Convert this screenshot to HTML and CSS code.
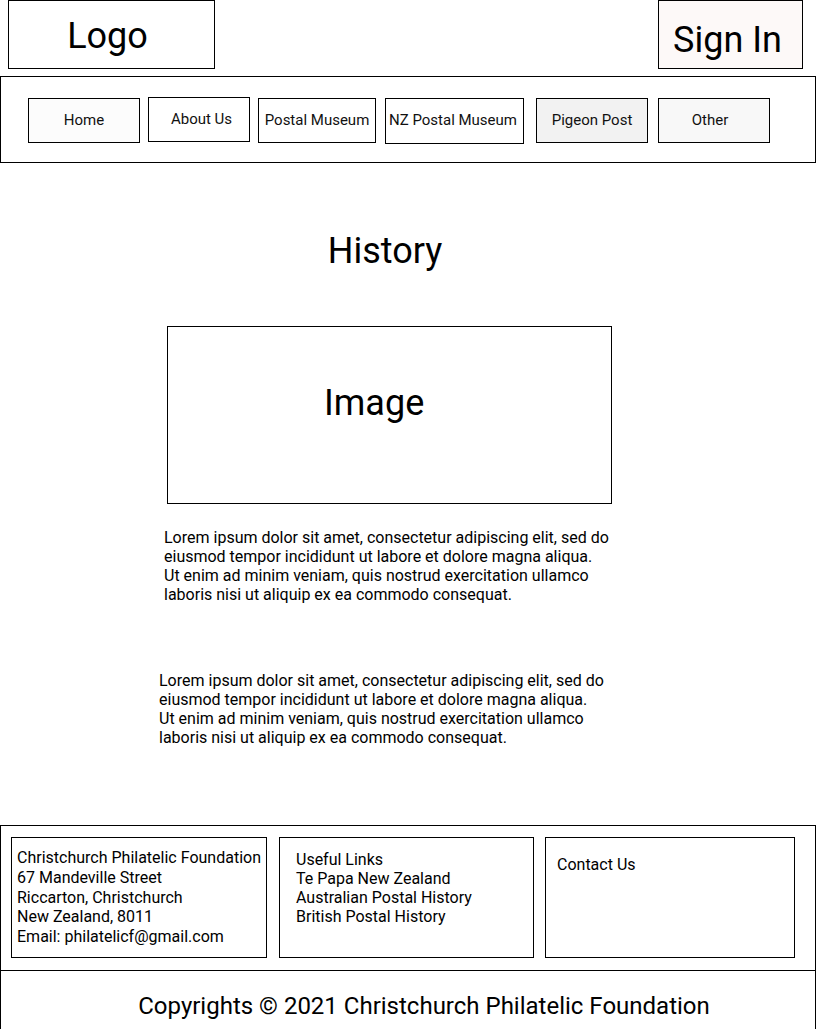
FILE: index.html
```html
<!DOCTYPE html>
<html lang="en">
<head>
<meta charset="utf-8">
<title>History</title>
<link rel="stylesheet" href="styles.css">
</head>
<body>
<header class="top">
  <div class="logo">Logo</div>
  <div class="signin">Sign In</div>
</header>
<nav class="nav">
  <a class="nav-item home">Home</a>
  <a class="nav-item about">About Us</a>
  <a class="nav-item postal">Postal Museum</a>
  <a class="nav-item nz">NZ Postal Museum</a>
  <a class="nav-item pigeon">Pigeon Post</a>
  <a class="nav-item other">Other</a>
</nav>
<main class="main">
  <h1 class="title">History</h1>
  <div class="image"><span class="image-label">Image</span></div>
  <p class="para para-one">Lorem ipsum dolor sit amet, consectetur adipiscing elit, sed do<br>eiusmod tempor incididunt ut labore et dolore magna aliqua.<br>Ut enim ad minim veniam, quis nostrud exercitation ullamco<br>laboris nisi ut aliquip ex ea commodo consequat.</p>
  <p class="para para-two">Lorem ipsum dolor sit amet, consectetur adipiscing elit, sed do<br>eiusmod tempor incididunt ut labore et dolore magna aliqua.<br>Ut enim ad minim veniam, quis nostrud exercitation ullamco<br>laboris nisi ut aliquip ex ea commodo consequat.</p>
</main>
<footer class="footer">
  <div class="footer-cols">
    <div class="fcol fcol-address">Christchurch Philatelic Foundation<br>67 Mandeville Street<br>Riccarton, Christchurch<br>New Zealand, 8011<br>Email: philatelicf@gmail.com</div>
    <div class="fcol fcol-links">Useful Links<br>Te Papa New Zealand<br>Australian Postal History<br>British Postal History</div>
    <div class="fcol fcol-contact">Contact Us</div>
  </div>
  <div class="copyright">Copyrights © 2021 Christchurch Philatelic Foundation</div>
</footer>
</body>
</html>
```
FILE: styles.css
```css
* { box-sizing: border-box; }
html, body { margin: 0; padding: 0; background: #fff; }
body {
  font-family: Roboto, "Liberation Sans", sans-serif;
  color: #000;
  width: 816px;
}
.top {
  display: flex;
  justify-content: space-between;
  height: 69px;
}
.logo {
  margin-left: 8px;
  width: 207px;
  height: 69px;
  border: 1px solid #000;
  font-size: 36px;
  text-align: center;
  padding: 3px 8px 0 0;
  line-height: 64px;
}
.signin {
  margin-right: 13px;
  width: 145px;
  height: 69px;
  border: 1px solid #000;
  background: #fdf9f8;
  font-size: 36px;
  text-align: center;
  padding: 15px 6px 0 0;
  line-height: 48px;
}
.nav {
  margin-top: 7px;
  height: 87px;
  border: 1px solid #000;
  display: flex;
  align-items: flex-start;
  padding: 21px 0 0 27px;
}
.nav-item {
  display: flex;
  align-items: center;
  justify-content: center;
  height: 45px;
  border: 1px solid #000;
  font-size: 15px;
  color: #111;
  padding-bottom: 2px;
}
.home { width: 112px; background: #fcfcfc; }
.about { width: 102px; margin-left: 8px; margin-top: -1px; padding-left: 5px; }
.postal { width: 118px; margin-left: 8px; }
.nz { width: 139px; margin-left: 9px; height: 46px; padding-right: 3px; }
.pigeon { width: 112px; margin-left: 12px; background: #f2f2f2; }
.other { width: 112px; margin-left: 10px; background: #f8f8f8; padding-right: 8px; }
.main {
  height: 662px;
  padding-top: 67px;
}
.title {
  margin: 0;
  font-weight: 400;
  font-size: 36px;
  line-height: 42px;
  text-align: center;
  width: 770px;
}
.image {
  margin: 54px 0 0 167px;
  width: 445px;
  height: 178px;
  border: 1px solid #000;
  padding-top: 55px;
  padding-left: 156px;
  font-size: 36px;
  line-height: 42px;
}
.para {
  margin: 0;
  font-size: 16px;
  line-height: 19px;
}
.para-one { margin: 24px 0 0 164px; }
.para-two { margin: 67px 0 0 159px; }
.footer {
  border: 1px solid #000;
  border-bottom: none;
  height: 204px;
}
.footer-cols {
  display: flex;
  padding: 11px 0 12px 10px;
  border-bottom: 1px solid #000;
}
.fcol {
  height: 121px;
  border: 1px solid #000;
  font-size: 16px;
  line-height: 19.75px;
}
.fcol-address { width: 256px; padding: 10px 0 0 5px; }
.fcol-links { width: 255px; margin-left: 12px; padding: 12px 0 0 16px; line-height: 19px; }
.fcol-contact { width: 250px; margin-left: 11px; padding: 17px 0 0 11px; }
.copyright {
  text-align: center;
  font-size: 24px;
  line-height: 28px;
  padding-top: 21px;
  padding-left: 32px;
}
```
